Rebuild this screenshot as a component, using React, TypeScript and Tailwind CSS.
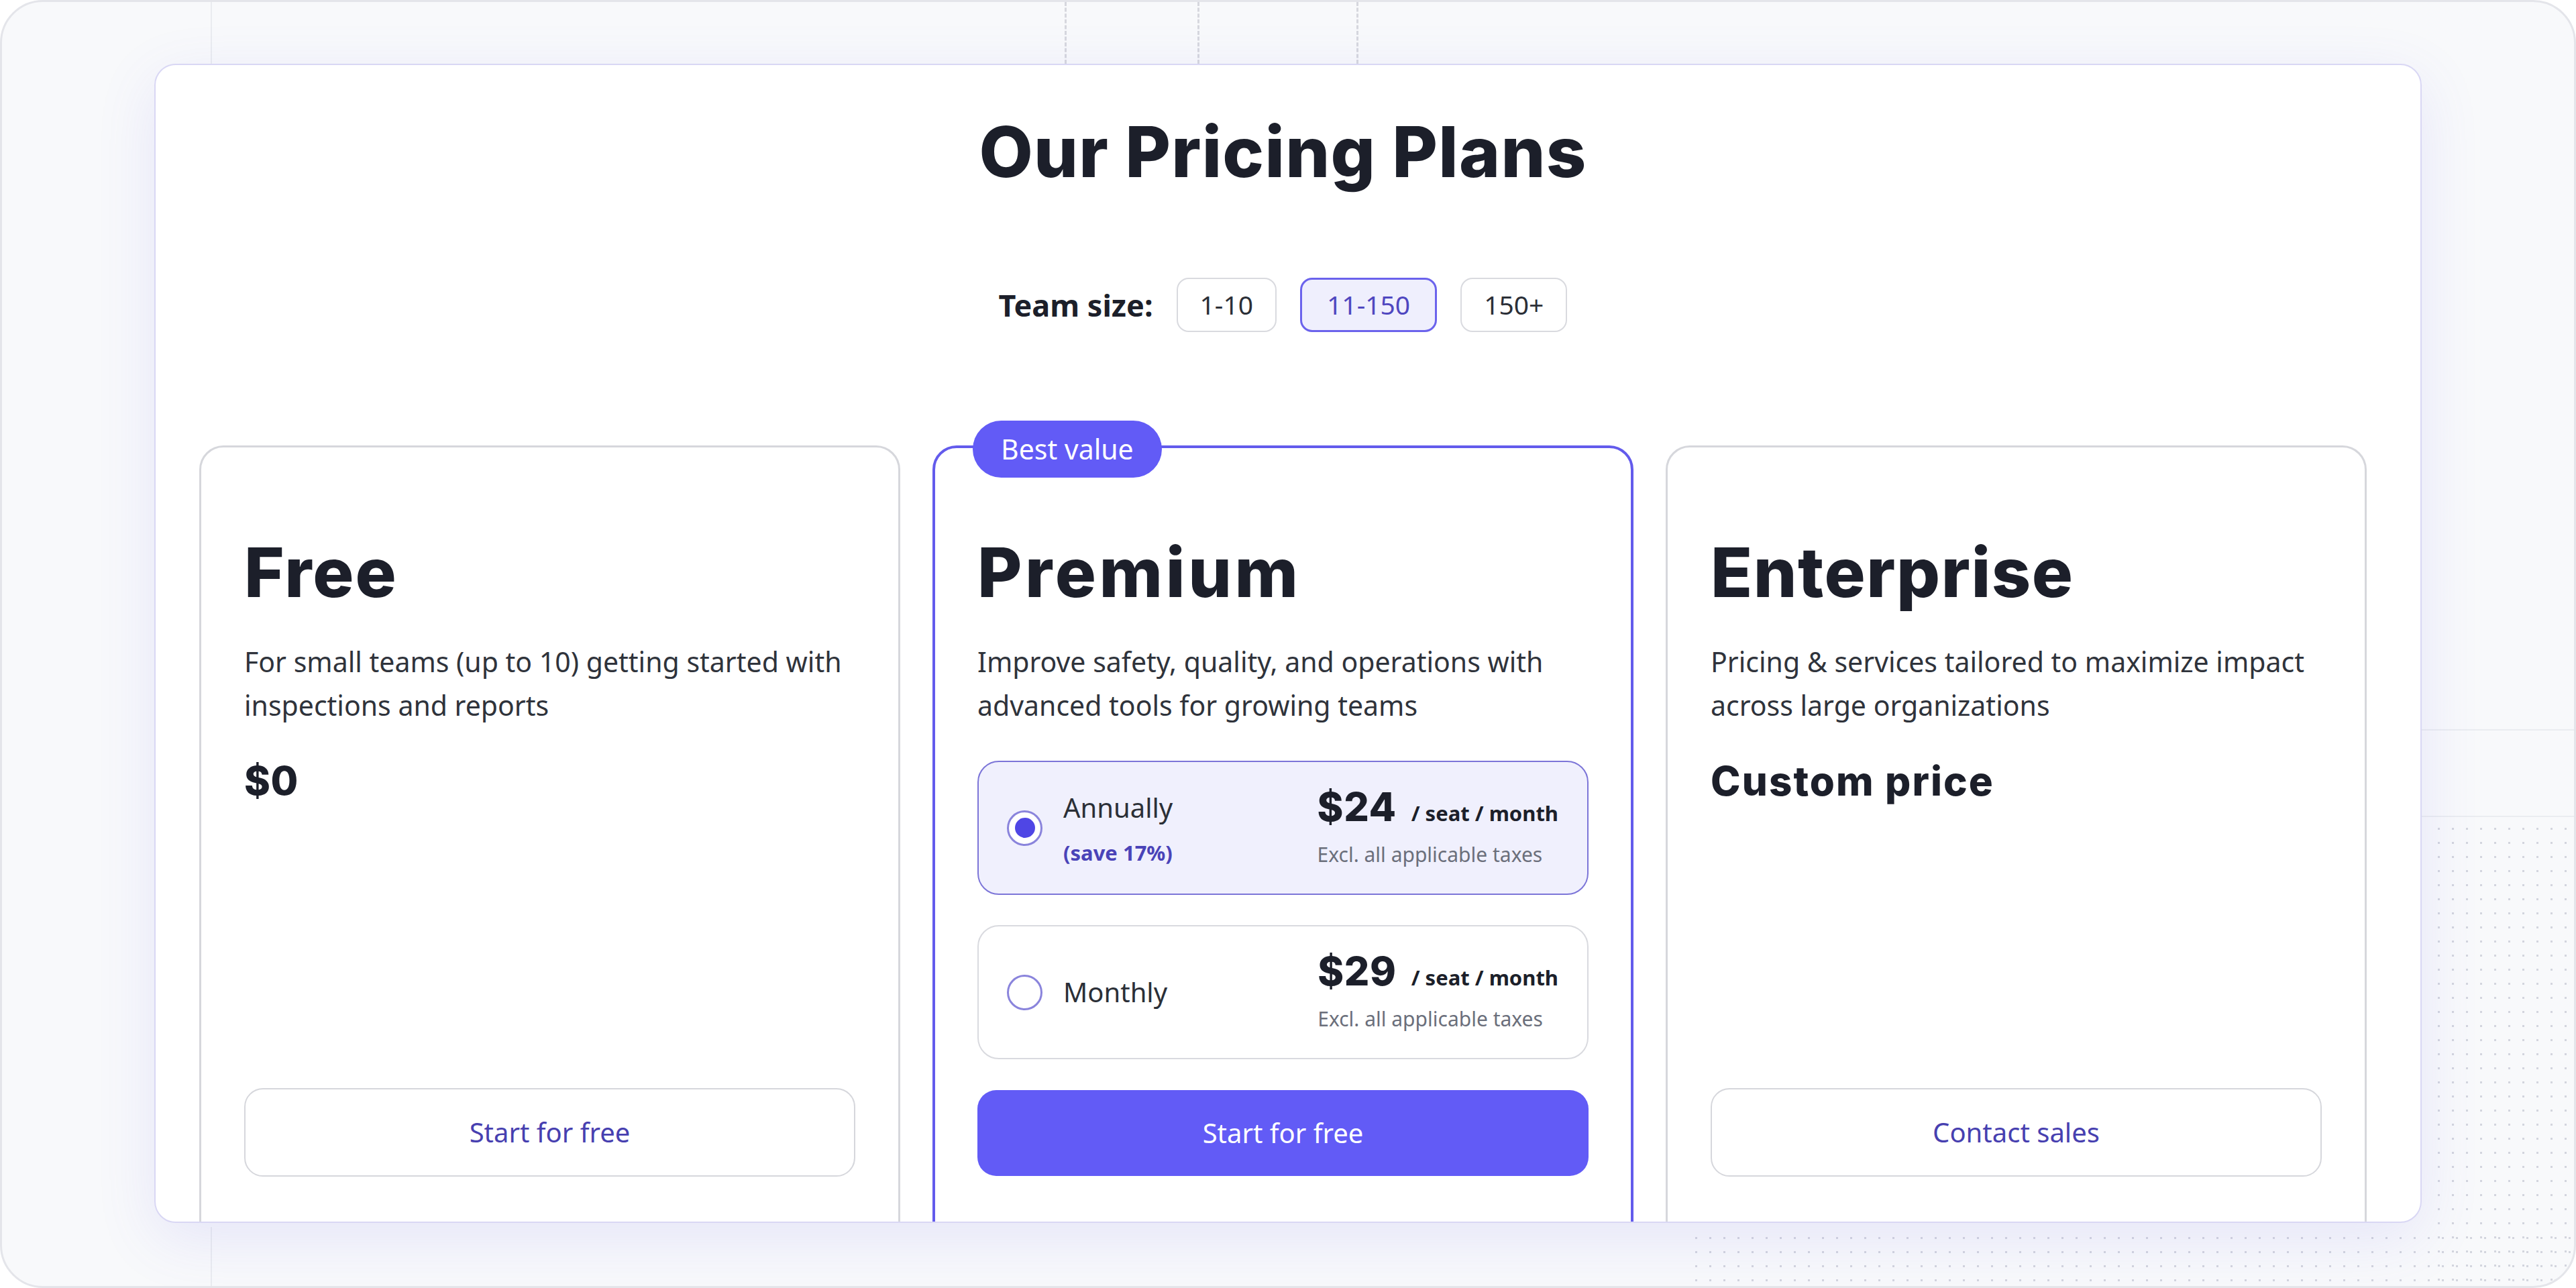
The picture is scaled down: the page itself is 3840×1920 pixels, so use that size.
import { useState } from "react";

const teamSizes = ["1-10", "11-150", "150+"];

const heading = "font-['Inter',sans-serif] text-[#1c1f2a]";

function Radio({ checked }: { checked: boolean }) {
  return (
    <span className="flex h-[53px] w-[53px] shrink-0 items-center justify-center rounded-full border-[3px] border-[#8a84dc] bg-white">
      {checked && <span className="h-[30px] w-[30px] rounded-full bg-[#4f46e5]"></span>}
    </span>
  );
}

function BillingOption({
  label,
  note,
  price,
  checked,
  onSelect,
}: {
  label: string;
  note?: string;
  price: string;
  checked: boolean;
  onSelect: () => void;
}) {
  return (
    <button
      onClick={onSelect}
      className={
        checked
          ? "flex h-[200px] w-full items-center justify-between rounded-[32px] border-2 border-[#7c75d8] bg-[#f0f0fd] pl-[42px] pr-[43px] text-left"
          : "flex h-[200px] w-full items-center justify-between rounded-[32px] border-2 border-[#d9dadf] bg-white pl-[42px] pr-[43px] text-left"
      }
    >
      <div className="flex items-center gap-[31px]">
        <Radio checked={checked} />
        <div className="flex flex-col">
          <span className="text-[40px] leading-[56px] text-[#2b2f37]">{label}</span>
          {note && (
            <span className="mt-[17px] text-[31px] font-bold leading-[44px] text-[#4a43b8]">
              {note}
            </span>
          )}
        </div>
      </div>
      <div className="flex flex-col">
        <div className="flex items-baseline gap-[22px]">
          <span className={`${heading} text-[59px] font-extrabold leading-[58px] tracking-[0.01em]`}>{price}</span>
          <span className="text-[31px] font-bold text-[#1c1f2a]">/ seat / month</span>
        </div>
        <span className="mt-[18px] text-[30px] leading-[40px] text-[#6b6f7b]">
          Excl. all applicable taxes
        </span>
      </div>
    </button>
  );
}

export default function App() {
  const [teamSize, setTeamSize] = useState("11-150");
  const [billing, setBilling] = useState<"annual" | "monthly">("annual");

  return (
    <div className="min-h-screen bg-white font-['Noto_Sans',sans-serif]">
      <div className="relative h-[1920px] w-full overflow-hidden rounded-[64px] border-[3px] border-[#e4e5ea] bg-[#f8f9fb] pl-[227px] pt-[92px]">
        {/* background decoration */}
        <div className="pointer-events-none absolute left-[311px] top-0 h-[92px] w-[2px] bg-[#eaecf0]"></div>
        <div className="pointer-events-none absolute left-[311px] top-[1826px] bottom-0 w-[2px] bg-[#eaecf0]"></div>
        <div className="pointer-events-none absolute left-[1584px] top-0 h-[92px] border-l-[3px] border-dashed border-[#d6d7de]"></div>
        <div className="pointer-events-none absolute left-[1782px] top-0 h-[92px] border-l-[3px] border-dashed border-[#d6d7de]"></div>
        <div className="pointer-events-none absolute left-[2019px] top-0 h-[92px] border-l-[3px] border-dashed border-[#d6d7de]"></div>
        <div className="pointer-events-none absolute left-[3600px] right-0 top-[1084px] h-[2px] bg-[#eaecf0]"></div>
        <div className="pointer-events-none absolute left-[3600px] right-0 top-[1213px] h-[2px] bg-[#eaecf0]"></div>
        <div className="pointer-events-none absolute left-[3622px] right-0 top-[1222px] bottom-0 bg-[radial-gradient(circle,#d3d5de_1.5px,transparent_2px)] bg-[length:21px_21px]"></div>
        <div className="pointer-events-none absolute left-[2515px] right-0 top-[1832px] bottom-0 bg-[radial-gradient(circle,#d3d5de_1.5px,transparent_2px)] bg-[length:21px_21px]"></div>

        <section className="relative z-10 h-[1728px] w-[3380px] overflow-hidden rounded-[32px] border-2 border-[#d9d7f4] bg-white pl-[65px] pr-[80px] pt-[77px] shadow-[0_24px_90px_rgba(96,88,230,0.12)]">
          <h1 className={`${heading} text-center text-[104px] font-extrabold leading-[104px] tracking-[0.012em]`}>
            Our Pricing Plans
          </h1>

          {/* Team size */}
          <div className="mt-[136px] flex items-center justify-center gap-[35px]">
            <span className="text-[45px] font-bold text-[#1c1f2a]">Team size:</span>
            {teamSizes.map((size) => (
              <button
                key={size}
                onClick={() => setTeamSize(size)}
                className={
                  teamSize === size
                    ? "flex h-[81px] items-center rounded-[18px] border-[3px] border-[#6b63ec] bg-[#efeffd] px-[37px] text-[39px] text-[#4f47c0]"
                    : "flex h-[81px] items-center rounded-[18px] border-2 border-[#d9dadf] bg-white px-[33px] text-[39px] text-[#2b2f37]"
                }
              >
                {size}
              </button>
            ))}
          </div>

          {/* Plans */}
          <div className="mt-[169px] grid grid-cols-3 gap-[48px]">
            <div className="flex flex-col rounded-[36px] border-[3px] border-[#d6d7dc] bg-white px-[64px] pb-[100px] pt-[136px]">
              <h2 className={`${heading} text-[102px] font-extrabold leading-[100px] tracking-[0.02em]`}>Free</h2>
              <p className="mt-[51px] text-[41px] leading-[65px] text-[#2f333b]">
                For small teams (up to 10) getting started with inspections and reports
              </p>
              <div className={`${heading} mt-[51px] text-[59px] font-extrabold leading-[58px] tracking-[0.01em]`}>$0</div>
              <div className="mt-auto pt-[46px]">
                <button className="-mt-[4px] h-[132px] w-full rounded-[28px] border-2 border-[#d6d7dc] bg-white text-[40px] text-[#4740b0]">
                  Start for free
                </button>
              </div>
            </div>

            <div className="relative flex flex-col rounded-[36px] border-4 border-[#635bec] bg-white px-[63px] pb-[100px] pt-[135px]">
              <span className="absolute -top-[41px] left-[56px] flex h-[85px] items-center rounded-full bg-[#625bf6] px-[42px] text-[41px] text-white">
                Best value
              </span>
              <h2 className={`${heading} text-[102px] font-extrabold leading-[100px] tracking-[0.045em]`}>Premium</h2>
              <p className="mt-[51px] text-[41px] leading-[65px] text-[#2f333b]">
                Improve safety, quality, and operations with advanced tools for growing teams
              </p>
              <div className="mt-[50px] flex flex-col gap-[45px]">
                <BillingOption
                  label="Annually"
                  note="(save 17%)"
                  price="$24"
                  checked={billing === "annual"}
                  onSelect={() => setBilling("annual")}
                />
                <BillingOption
                  label="Monthly"
                  price="$29"
                  checked={billing === "monthly"}
                  onSelect={() => setBilling("monthly")}
                />
              </div>
              <div className="mt-auto pt-[46px]">
                <button className="h-[128px] w-full rounded-[28px] bg-[#625bf6] text-[40px] text-white">
                  Start for free
                </button>
              </div>
            </div>

            <div className="flex flex-col rounded-[36px] border-[3px] border-[#d6d7dc] bg-white px-[64px] pb-[100px] pt-[136px]">
              <h2 className={`${heading} text-[102px] font-extrabold leading-[100px] tracking-[0.015em]`}>Enterprise</h2>
              <p className="mt-[51px] text-[41px] leading-[65px] text-[#2f333b]">
                Pricing &amp; services tailored to maximize impact across large organizations
              </p>
              <div className={`${heading} mt-[51px] text-[60px] font-extrabold leading-[58px] tracking-[0.035em]`}>
                Custom price
              </div>
              <div className="mt-auto pt-[46px]">
                <button className="-mt-[4px] h-[132px] w-full rounded-[28px] border-2 border-[#d6d7dc] bg-white text-[40px] text-[#4740b0]">
                  Contact sales
                </button>
              </div>
            </div>
          </div>
        </section>
      </div>
    </div>
  );
}
